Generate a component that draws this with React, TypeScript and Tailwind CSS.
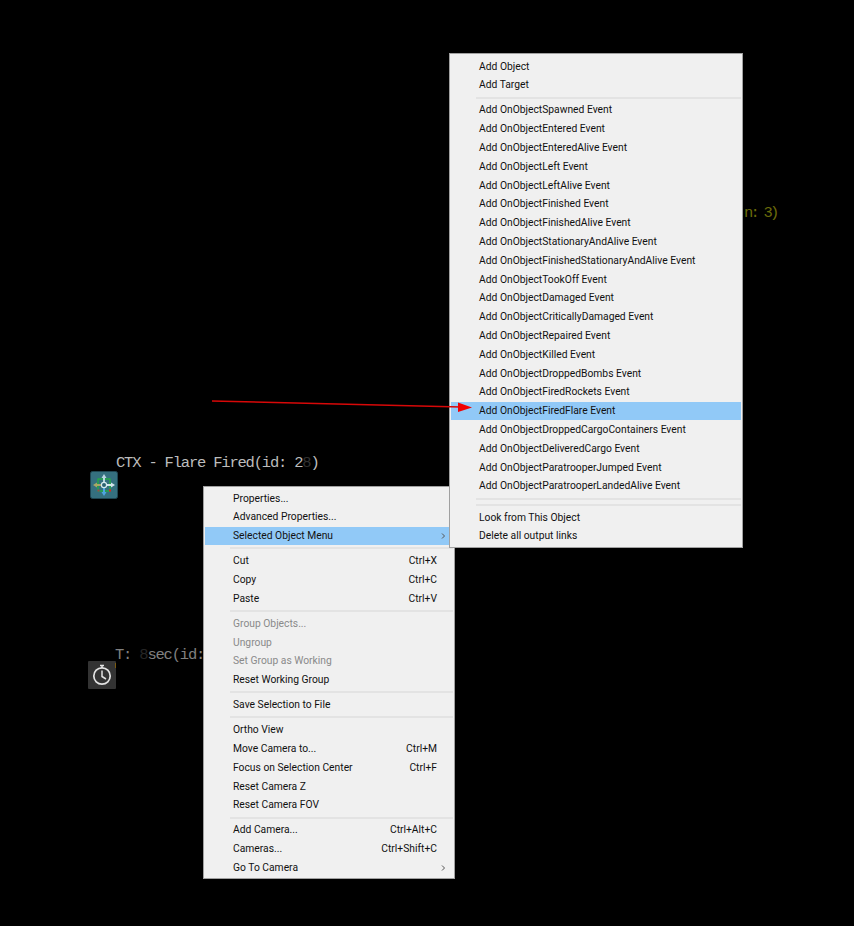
type Item = { label?: string; shortcut?: string; sub?: boolean; disabled?: boolean; active?: boolean; sep?: boolean };

const sideMenu: Item[] = [
  { label: "Properties..." },
  { label: "Advanced Properties..." },
  { label: "Selected Object Menu", sub: true, active: true },
  { sep: true },
  { label: "Cut", shortcut: "Ctrl+X" },
  { label: "Copy", shortcut: "Ctrl+C" },
  { label: "Paste", shortcut: "Ctrl+V" },
  { sep: true },
  { label: "Group Objects...", disabled: true },
  { label: "Ungroup", disabled: true },
  { label: "Set Group as Working", disabled: true },
  { label: "Reset Working Group" },
  { sep: true },
  { label: "Save Selection to File" },
  { sep: true },
  { label: "Ortho View" },
  { label: "Move Camera to...", shortcut: "Ctrl+M" },
  { label: "Focus on Selection Center", shortcut: "Ctrl+F" },
  { label: "Reset Camera Z" },
  { label: "Reset Camera FOV" },
  { sep: true },
  { label: "Add Camera...", shortcut: "Ctrl+Alt+C" },
  { label: "Cameras...", shortcut: "Ctrl+Shift+C" },
  { label: "Go To Camera", sub: true },
];

const objectMenu: Item[] = [
  { label: "Add Object" },
  { label: "Add Target" },
  { sep: true },
  { label: "Add OnObjectSpawned Event" },
  { label: "Add OnObjectEntered Event" },
  { label: "Add OnObjectEnteredAlive Event" },
  { label: "Add OnObjectLeft Event" },
  { label: "Add OnObjectLeftAlive Event" },
  { label: "Add OnObjectFinished Event" },
  { label: "Add OnObjectFinishedAlive Event" },
  { label: "Add OnObjectStationaryAndAlive Event" },
  { label: "Add OnObjectFinishedStationaryAndAlive Event" },
  { label: "Add OnObjectTookOff Event" },
  { label: "Add OnObjectDamaged Event" },
  { label: "Add OnObjectCriticallyDamaged Event" },
  { label: "Add OnObjectRepaired Event" },
  { label: "Add OnObjectKilled Event" },
  { label: "Add OnObjectDroppedBombs Event" },
  { label: "Add OnObjectFiredRockets Event" },
  { label: "Add OnObjectFiredFlare Event", active: true },
  { label: "Add OnObjectDroppedCargoContainers Event" },
  { label: "Add OnObjectDeliveredCargo Event" },
  { label: "Add OnObjectParatrooperJumped Event" },
  { label: "Add OnObjectParatrooperLandedAlive Event" },
  { sep: true },
  { sep: true },
  { label: "Look from This Object" },
  { label: "Delete all output links" },
];

const Menu = ({ items, className }: { items: Item[]; className: string }) => (
  <div className={`absolute flex flex-col border border-[#a0a0a0] bg-[#f0f0f0] px-[1px] font-['Roboto',sans-serif] text-[10.3px] text-[#111111] ${className}`}>
    {items.map((item, i) =>
      item.sep ? (
        <div key={i} className="ml-[25px] h-[6.2px] py-[2px]">
          <div className="h-[2px] bg-[#e3e3e3]" />
        </div>
      ) : (
        <div
          key={i}
          className={`flex h-[18.8px] shrink-0 items-center pl-[28px] pr-[4px] ${item.active ? "bg-[#91c9f7]" : ""} ${item.disabled ? "text-[#8a8a8a]" : ""}`}
        >
          <span className="flex-1 whitespace-nowrap">{item.label}</span>
          {item.shortcut && <span className="mr-[12px] whitespace-nowrap">{item.shortcut}</span>}
          {item.sub && (
            <svg width="13" height="10" viewBox="0 0 13 10" fill="none" stroke="#555" strokeWidth="1">
              <path d="M6 2.5 L8.5 5 L6 7.5" />
            </svg>
          )}
        </div>
      ),
    )}
  </div>
);

const FlareIcon = () => (
  <svg width="28" height="28" viewBox="0 0 28 28" className="absolute left-[90px] top-[471px]">
    <rect x="0.5" y="0.5" width="27" height="27" rx="2" fill="#35707f" stroke="#1f4652" />
    <rect x="8" y="8" width="12" height="12" fill="none" stroke="#22b53c" strokeWidth="1.2" />
    <path d="M14 3 L16.5 7 H15 V11 H13 V7 H11.5 Z" fill="#b9d6e0" />
    <path d="M14 25 L11.5 21 H13 V17 H15 V21 H16.5 Z" fill="#4ea6e0" />
    <path d="M3 14 L7 11.5 V13 H11 V15 H7 V16.5 Z" fill="#a9a866" />
    <path d="M25 14 L21 11.5 V13 H17 V15 H21 V16.5 Z" fill="#d5e6ea" />
    <circle cx="14" cy="14" r="2.6" fill="#2d6272" stroke="#d6e9ee" strokeWidth="1.2" />
    <rect x="19" y="18.5" width="2" height="2" fill="#e02020" />
    <rect x="7.5" y="18.5" width="2" height="2" fill="#a04050" />
  </svg>
);

const TimerIcon = () => (
  <svg width="28" height="28" viewBox="0 0 28 28" className="absolute left-[88px] top-[661px]">
    <rect width="28" height="28" rx="1" fill="#333333" />
    <circle cx="14" cy="15" r="8.2" fill="none" stroke="#e2e2e2" strokeWidth="1.7" />
    <path d="M14 9.5 V15.5 L18 18" fill="none" stroke="#e2e2e2" strokeWidth="1.5" />
    <path d="M12 4.5 H16 M14 4.5 V7" fill="none" stroke="#e2e2e2" strokeWidth="1.6" />
  </svg>
);

const App = () => {
  return (
    <div className="relative h-[926px] w-[854px] overflow-hidden bg-black">
      <div className="absolute left-[116px] top-[454px] whitespace-nowrap font-['Liberation_Mono',monospace] text-[15.5px] leading-[18px] tracking-[-1.2px] text-[#bcbcbc]">
        CTX - Flare Fired(id: 2<span className="text-[#303030]">8</span>)
      </div>
      <FlareIcon />

      <div className="absolute left-[115px] top-[646px] whitespace-nowrap font-['Liberation_Mono',monospace] text-[15.5px] leading-[18px] tracking-[-1.2px] text-[#808080]">
        T: <span className="text-[#262626]">8</span>sec(id: 2
      </div>
      <TimerIcon />
      <div className="absolute left-[115px] top-[663px] h-[5px] w-[1px] bg-[#7a5a10]" />

      <div className="absolute left-[744px] top-[204px] whitespace-nowrap font-['Liberation_Mono',monospace] text-[15.5px] leading-[18px] tracking-[-2.8px] text-[#6b6b0a]">
        n: 3)
      </div>

      <Menu items={sideMenu} className="left-[203px] top-[486px] h-[393px] w-[252px] pt-[2px]" />
      <Menu items={objectMenu} className="left-[449px] top-[53px] h-[495px] w-[294px] pt-[3px]" />

      <svg width="280" height="24" viewBox="0 0 280 24" className="absolute left-[205px] top-[393px]">
        <path d="M7 8 L256 14" stroke="#d80808" strokeWidth="1.4" fill="none" />
        <path d="M267 14.4 L253 9.5 L253 19 Z" fill="#f00000" />
      </svg>
    </div>
  );
};

export default App;
